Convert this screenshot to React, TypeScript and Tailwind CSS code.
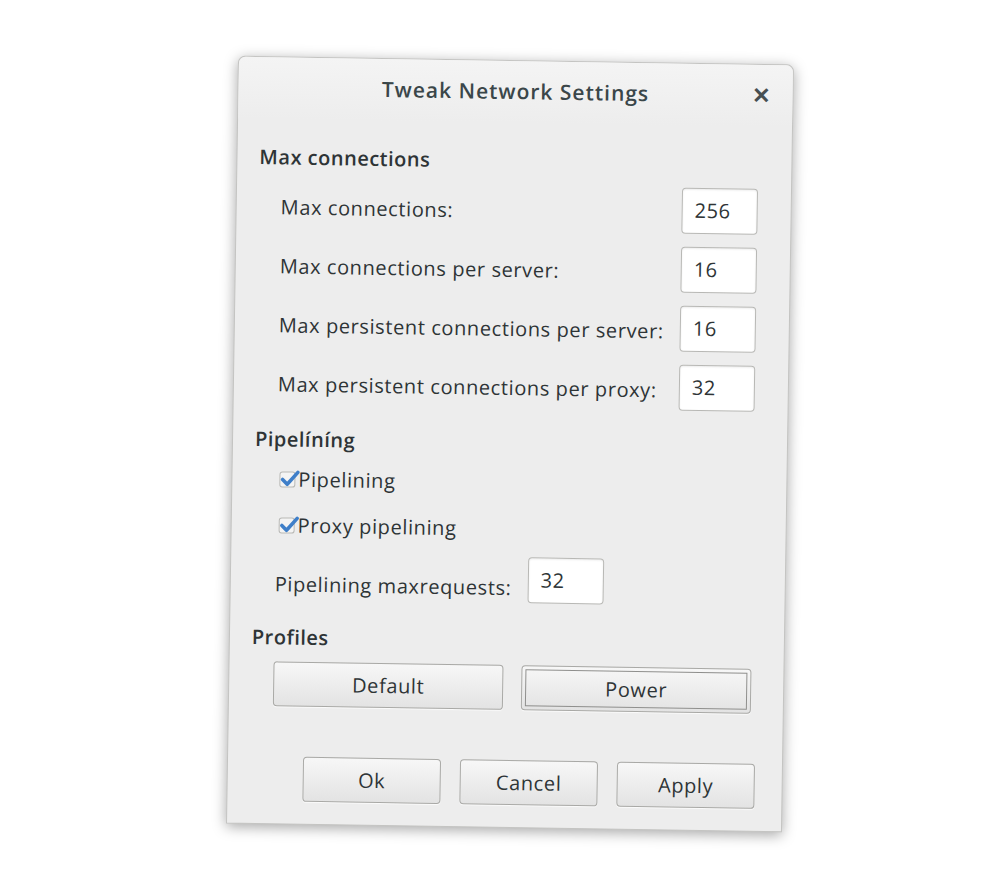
import { useState } from "react";

type row = {
  label: string;
  value: string;
};

const rows: row[] = [
  { label: "Max connections:", value: "256" },
  { label: "Max connections per server:", value: "16" },
  { label: "Max persistent connections per server:", value: "16" },
  { label: "Max persistent connections per proxy:", value: "32" },
];

const Check = ({ on }: { on: boolean }) => (
  <span className="relative inline-block w-[16px] h-[16px] mr-[3px] rounded-[3px] border border-[#b9b9b6] bg-[#f4f4f4]">
    {on && (
      <svg
        viewBox="0 0 20 20"
        className="absolute -top-[4px] -left-[1px] w-[21px] h-[21px]"
      >
        <path
          d="M3 10.5 L7.5 15 L17.5 3.5"
          fill="none"
          stroke="#3f7fc9"
          strokeWidth="3.4"
          strokeLinecap="round"
          strokeLinejoin="round"
        />
      </svg>
    )}
  </span>
);

const Field = ({ value }: { value: string }) => (
  <div className="w-[76px] h-[46px] shrink-0 rounded-[4px] border border-[#b8b8b5] bg-white shadow-[inset_0_1px_2px_rgba(0,0,0,0.08)] pl-[12px] flex items-center text-[20px] tracking-[0.5px] text-[#2e3436]">
    {value}
  </div>
);

const Btn = ({
  label,
  focus,
  className,
}: {
  label: string;
  focus?: boolean;
  className: string;
}) => (
  <button
    className={`${className} rounded-[4px] border border-[#a9a9a6] bg-gradient-to-b from-[#f7f7f7] to-[#e3e3e3] text-[20px] tracking-[0.6px] text-[#2e3436] shadow-[0_1px_1px_rgba(255,255,255,0.8)] flex items-center justify-center ${
      focus ? "outline outline-1 outline-offset-[-5px] outline-[#8f8f8d]" : ""
    }`}
  >
    {label}
  </button>
);

const App = () => {
  const [pipe, setPipe] = useState(true);
  const [proxy, setProxy] = useState(true);

  return (
    <div
      className="w-[1000px] h-[893px] bg-white flex items-start justify-center pt-[60px] pl-[20px]"
      style={{ fontFamily: '"Open Sans", "Noto Sans", sans-serif' }}
    >
      <div className="w-[556px] h-[768px] rotate-[0.9deg] bg-[#ededed] rounded-t-[7px] border border-[#c4c4c2] shadow-[0_3px_14px_rgba(0,0,0,0.35)] flex flex-col text-[#2e3436]">
        {/* title */}
        <div className="h-[62px] rounded-t-[7px] bg-gradient-to-b from-[#f4f4f4] to-[#ededed] relative flex items-center justify-center">
          <span className="text-[21px] font-semibold text-[#3a4649] tracking-[1px]">
            Tweak Network Settings
          </span>
          <span className="absolute right-[22px] top-[18px] text-[22px] font-bold text-[#474f51] leading-none">
            ✕
          </span>
        </div>

        <div className="flex-1 flex flex-col px-[22px]">
          <div className="text-[20px] tracking-[0.5px] font-semibold mt-[24px] leading-[28px]">
            Max connections
          </div>
          <div className="flex flex-col gap-[13px] mt-[10px] pl-[22px] pr-[11px]">
            {rows.map((r) => (
              <div key={r.label} className="flex items-center justify-between">
                <span className="text-[20px] tracking-[0.6px] pt-[6px] whitespace-nowrap">
                  {r.label}
                </span>
                <Field value={r.value} />
              </div>
            ))}
          </div>

          <div className="text-[20px] tracking-[0.5px] font-semibold mt-[21px] leading-[28px]">
            Pipelíníng
          </div>
          <div className="flex flex-col gap-[18px] mt-[12px] pl-[25px]">
            <label
              className="flex items-center text-[20px] tracking-[0.6px] leading-[28px]"
              onClick={() => setPipe(!pipe)}
            >
              <Check on={pipe} />
              Pipelining
            </label>
            <label
              className="flex items-center text-[20px] tracking-[0.6px] leading-[28px]"
              onClick={() => setProxy(!proxy)}
            >
              <Check on={proxy} />
              Proxy pipelining
            </label>
          </div>
          <div className="flex items-center gap-[16px] mt-[14px] pl-[22px]">
            <span className="text-[20px] tracking-[0.6px] pt-[16px]">
              Pipelining maxrequests:
            </span>
            <Field value="32" />
          </div>

          <div className="text-[20px] tracking-[0.5px] font-semibold mt-[24px] leading-[28px]">
            Profiles
          </div>
          <div className="flex gap-[18px] mt-[10px] pl-[22px]">
            <Btn label="Default" className="w-[230px] h-[45px]" />
            <Btn label="Power" focus className="w-[230px] h-[45px]" />
          </div>

          <div className="flex gap-[19px] mt-[50px] pl-[53px]">
            <Btn label="Ok" className="w-[138px] h-[45px]" />
            <Btn label="Cancel" className="w-[138px] h-[45px]" />
            <Btn label="Apply" className="w-[138px] h-[45px]" />
          </div>
        </div>
      </div>
    </div>
  );
};

export default App;
